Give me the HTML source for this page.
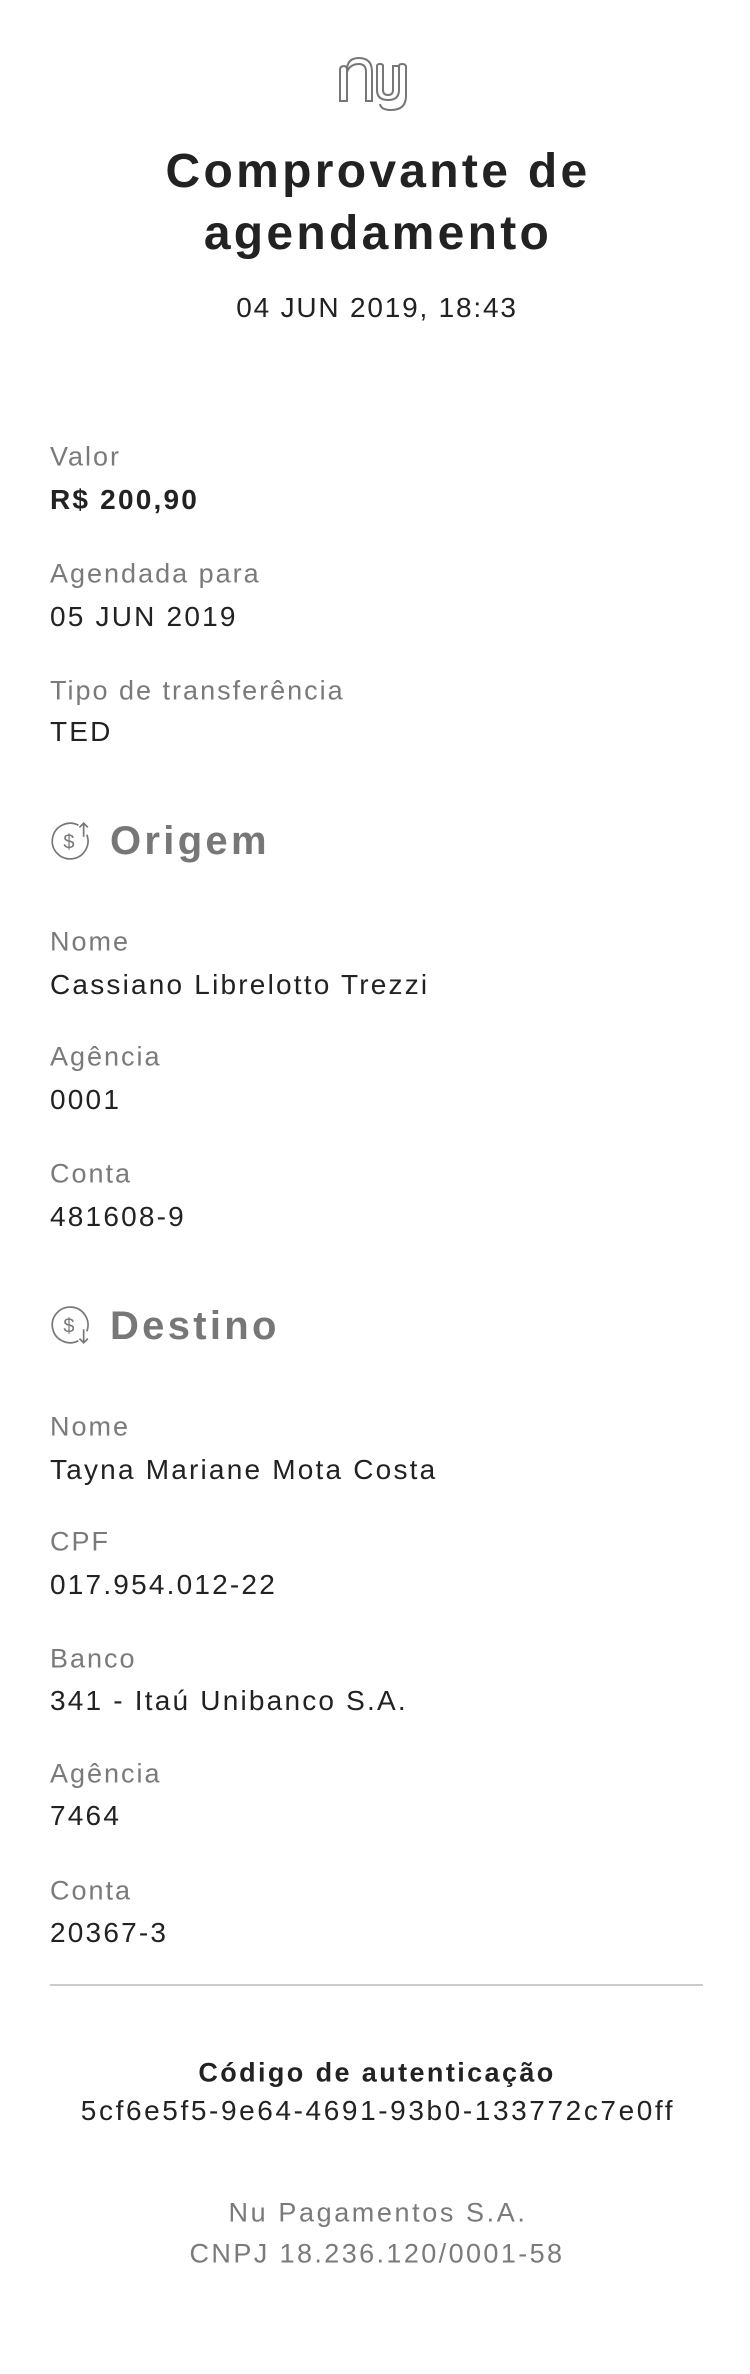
<!DOCTYPE html>
<html><head><meta charset="utf-8"><style>
body{margin:0;width:750px;height:2374px;background:#fff;position:relative;font-family:"Liberation Sans",sans-serif;overflow:hidden}
.t{position:absolute;white-space:nowrap;line-height:1;transform:translateY(-50%)}
.l{left:50px;font-size:27px;color:#7a7a7a;letter-spacing:2px}
.v{left:50px;font-size:28px;color:#222;letter-spacing:2.2px}
.c{left:0;width:750px;text-align:center}
.h{left:110px;font-size:40px;font-weight:bold;color:#777;letter-spacing:3.3px}
</style></head><body>
<svg style="position:absolute;left:336px;top:54px" width="80" height="60" viewBox="0 0 80 60" fill="none" stroke="#777" stroke-width="2">
<path d="M4 47 V16 Q4 12 8 12 Q11 12 11 16 V47 Z"/>
<path d="M11 16 Q11 4 23 4 Q36 4 36 18 V47 H30 V18 Q30 10 23 10 Q14 10 11 18"/>
<path d="M41 12 V36 Q41 46 52 46 Q63 46 63 36 V12 Q63 10 66 10 Q70 10 70 13 V42 Q70 56 55 56 Q45 56 44 50"/>
<path d="M41 12 Q41 10 44 10 Q47 10 47 12 V36 Q47 41 52 41 Q57 41 57 36 V12 H63"/>
</svg>
<div class="t c" style="top:172px;font-size:48px;font-weight:bold;color:#222;letter-spacing:3.3px;padding-left:3px">Comprovante de</div>
<div class="t c" style="top:234px;font-size:48px;font-weight:bold;color:#222;letter-spacing:3.3px;padding-left:3px">agendamento</div>
<div class="t c" style="top:308px;font-size:28px;color:#222;letter-spacing:1.8px;padding-left:2px">04 JUN 2019, 18:43</div>

<div class="t l" style="top:457px">Valor</div>
<div class="t v" style="top:500px;font-weight:bold">R$ 200,90</div>
<div class="t l" style="top:574px">Agendada para</div>
<div class="t v" style="top:617px">05 JUN 2019</div>
<div class="t l" style="top:691px">Tipo de transferência</div>
<div class="t v" style="top:732px">TED</div>

<svg style="position:absolute;left:49px;top:820px" width="42" height="42" viewBox="0 0 40 40" fill="none" stroke="#777" stroke-width="1.6">
<path d="M28 5 A17 17 0 1 0 36 14"/><path d="M33 3 V16 M29 7 L33 3 L37 7"/>
<text x="19" y="27" font-size="19" fill="#777" stroke="none" text-anchor="middle" font-family="Liberation Sans">$</text>
</svg>
<div class="t h" style="top:841px">Origem</div>
<div class="t l" style="top:942px">Nome</div>
<div class="t v" style="top:985px">Cassiano Librelotto Trezzi</div>
<div class="t l" style="top:1057px">Agência</div>
<div class="t v" style="top:1100px">0001</div>
<div class="t l" style="top:1174px">Conta</div>
<div class="t v" style="top:1217px">481608-9</div>

<svg style="position:absolute;left:49px;top:1304px" width="42" height="42" viewBox="0 0 40 40" fill="none" stroke="#777" stroke-width="1.6">
<path d="M28 35 A17 17 0 1 1 36 26"/><path d="M33 24 V37 M29 33 L33 37 L37 33"/>
<text x="19" y="27" font-size="19" fill="#777" stroke="none" text-anchor="middle" font-family="Liberation Sans">$</text>
</svg>
<div class="t h" style="top:1326px">Destino</div>
<div class="t l" style="top:1427px">Nome</div>
<div class="t v" style="top:1470px">Tayna Mariane Mota Costa</div>
<div class="t l" style="top:1542px">CPF</div>
<div class="t v" style="top:1585px">017.954.012-22</div>
<div class="t l" style="top:1659px">Banco</div>
<div class="t v" style="top:1701px">341 - Itaú Unibanco S.A.</div>
<div class="t l" style="top:1774px">Agência</div>
<div class="t v" style="top:1816px">7464</div>
<div class="t l" style="top:1891px">Conta</div>
<div class="t v" style="top:1933px">20367-3</div>

<div style="position:absolute;left:50px;top:1984px;width:653px;height:2px;background:#ccc"></div>
<div class="t c" style="top:2073px;font-size:27px;font-weight:bold;color:#222;letter-spacing:2.4px;padding-left:2px">Código de autenticação</div>
<div class="t c" style="top:2111px;font-size:28px;color:#222;letter-spacing:2.6px;padding-left:3px">5cf6e5f5-9e64-4691-93b0-133772c7e0ff</div>
<div class="t c" style="top:2213px;font-size:27px;color:#7a7a7a;letter-spacing:2.6px;padding-left:3px">Nu Pagamentos S.A.</div>
<div class="t c" style="top:2254px;font-size:27px;color:#7a7a7a;letter-spacing:2.4px;padding-left:2px">CNPJ 18.236.120/0001-58</div>
</body></html>
